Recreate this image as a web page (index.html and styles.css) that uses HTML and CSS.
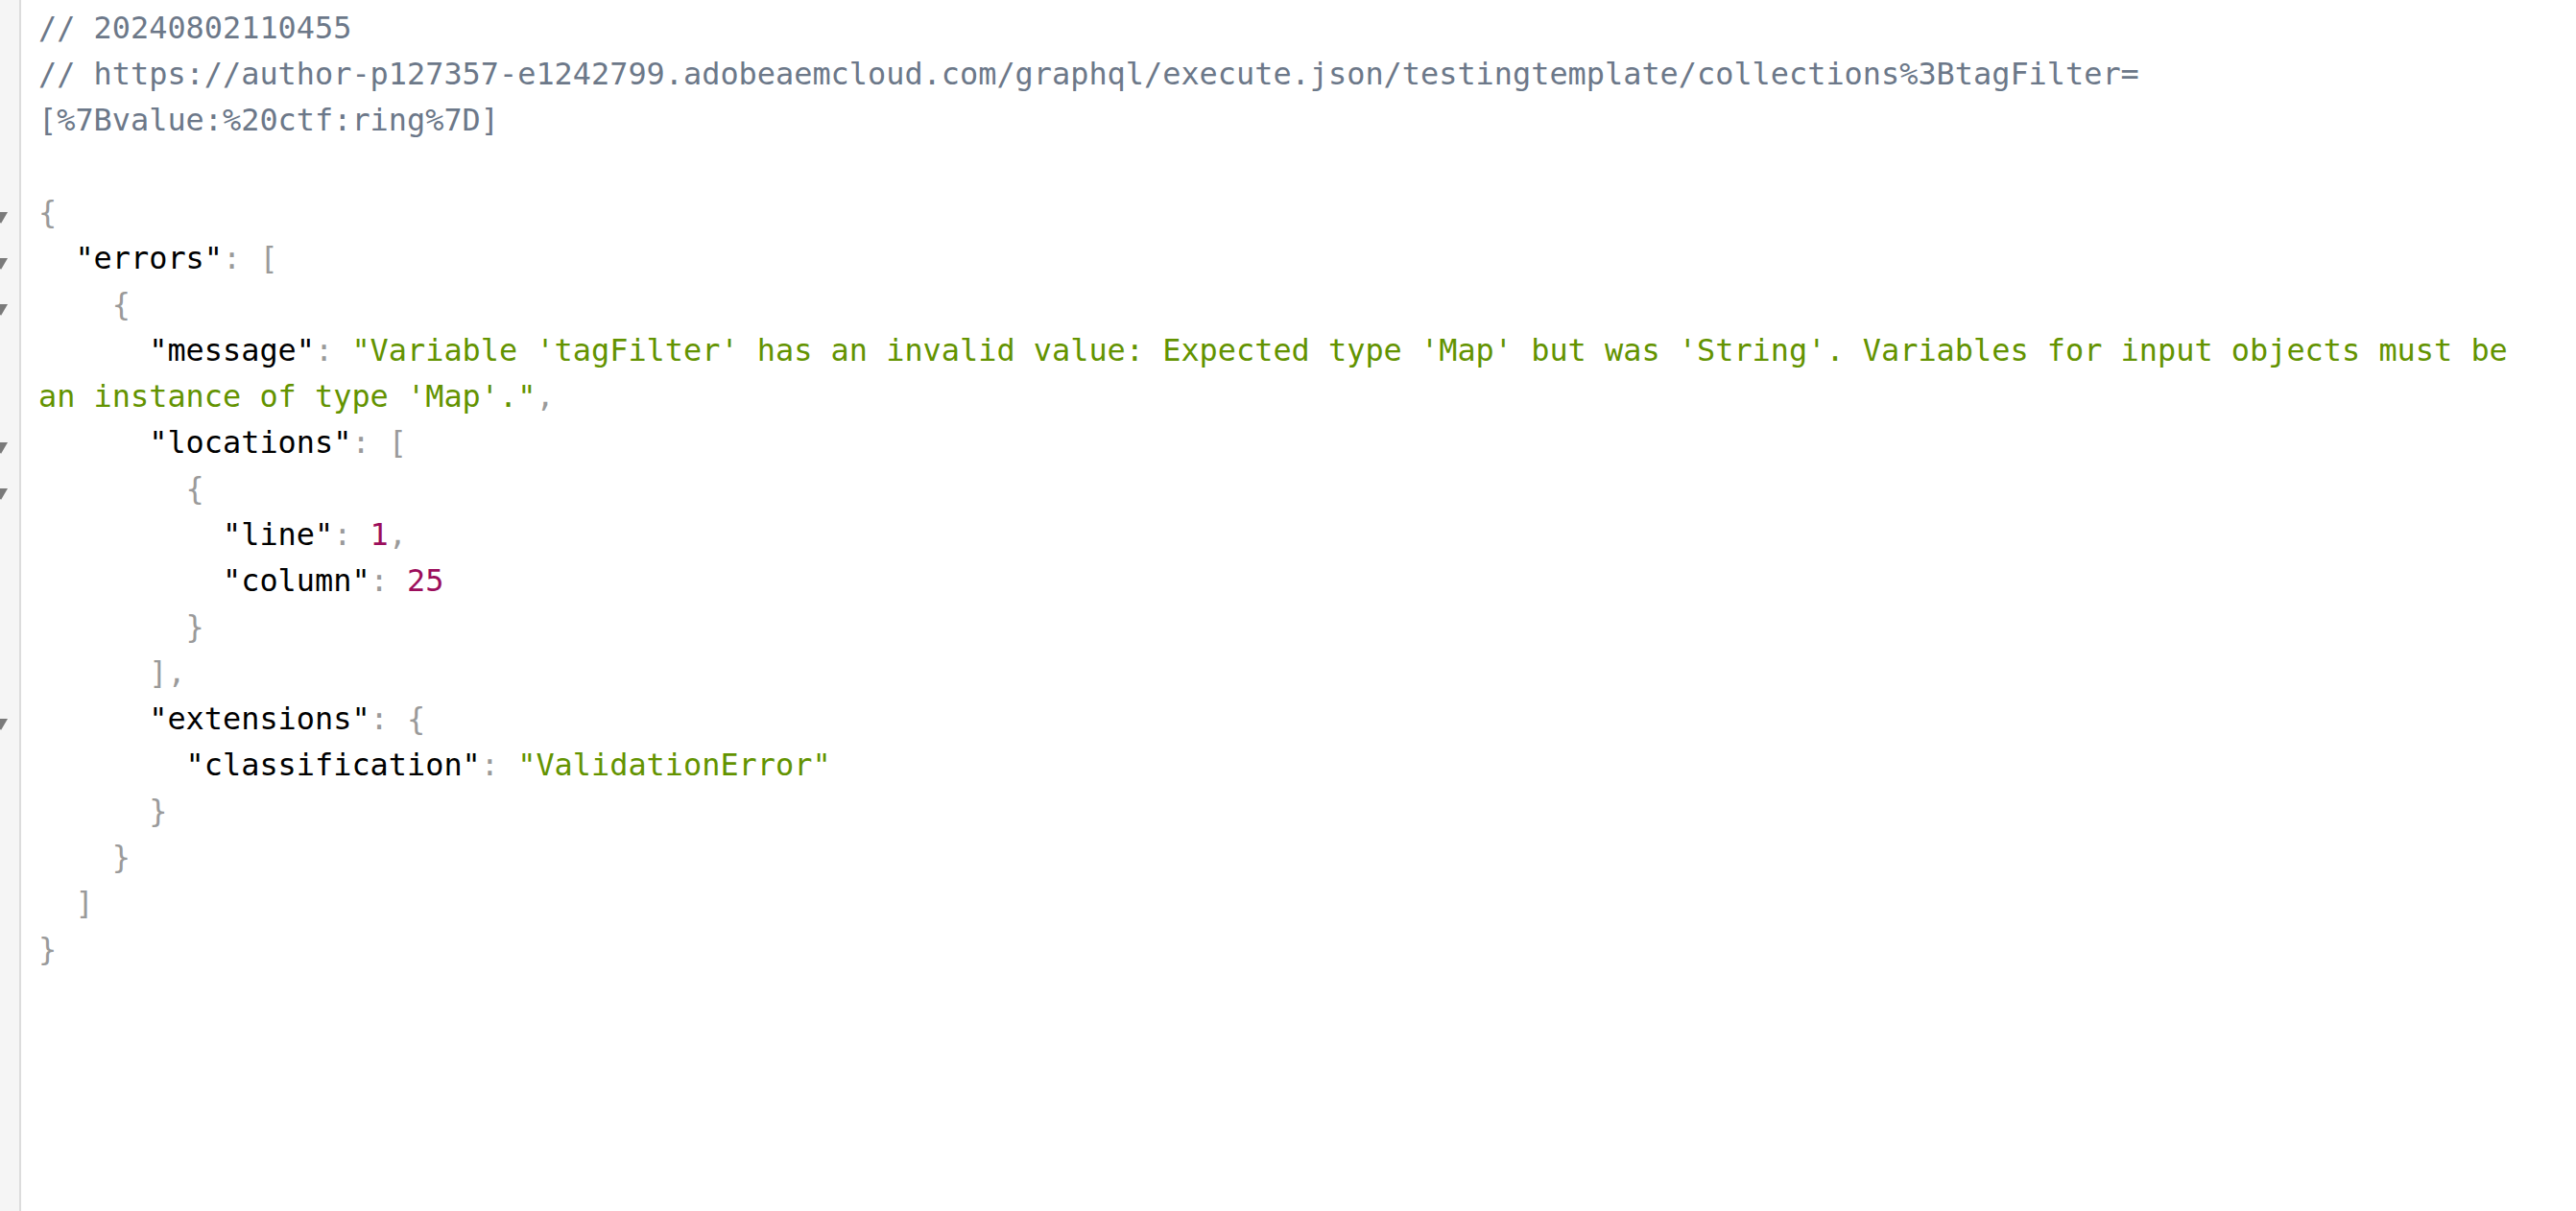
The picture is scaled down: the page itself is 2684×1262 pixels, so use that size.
FILE: index.html
```html
<!DOCTYPE html>
<html lang="en">
<head>
<meta charset="utf-8">
<title>JSON</title>
<link rel="stylesheet" href="styles.css">
</head>
<body>
<div class="viewer">
  <div class="gutter">
    <div class="g"></div>
    <div class="g"></div>
    <div class="g"></div>
    <div class="g"></div>
    <div class="g"><svg class="tri" viewBox="0 0 14 12"><polygon points="0,0 14,0 7,12"/></svg></div>
    <div class="g"><svg class="tri" viewBox="0 0 14 12"><polygon points="0,0 14,0 7,12"/></svg></div>
    <div class="g"><svg class="tri" viewBox="0 0 14 12"><polygon points="0,0 14,0 7,12"/></svg></div>
    <div class="g"></div>
    <div class="g"></div>
    <div class="g"><svg class="tri" viewBox="0 0 14 12"><polygon points="0,0 14,0 7,12"/></svg></div>
    <div class="g"><svg class="tri" viewBox="0 0 14 12"><polygon points="0,0 14,0 7,12"/></svg></div>
    <div class="g"></div>
    <div class="g"></div>
    <div class="g"></div>
    <div class="g"></div>
    <div class="g"><svg class="tri" viewBox="0 0 14 12"><polygon points="0,0 14,0 7,12"/></svg></div>
  </div>
  <div class="code">
    <div class="ln cm">// 20240802110455</div>
    <div class="ln cm">// https://author-p127357-e1242799.adobeaemcloud.com/graphql/execute.json/testingtemplate/collections%3BtagFilter=</div>
    <div class="ln cm">[%7Bvalue:%20ctf:ring%7D]</div>
    <div class="ln"> </div>
    <div class="ln"><span class="p">{</span></div>
    <div class="ln">  <span class="k">"errors"</span><span class="p">: [</span></div>
    <div class="ln">    <span class="p">{</span></div>
    <div class="ln">      <span class="k">"message"</span><span class="p">: </span><span class="s">"Variable 'tagFilter' has an invalid value: Expected type 'Map' but was 'String'. Variables for input objects must be</span></div>
    <div class="ln"><span class="s">an instance of type 'Map'."</span><span class="p">,</span></div>
    <div class="ln">      <span class="k">"locations"</span><span class="p">: [</span></div>
    <div class="ln">        <span class="p">{</span></div>
    <div class="ln">          <span class="k">"line"</span><span class="p">: </span><span class="n">1</span><span class="p">,</span></div>
    <div class="ln">          <span class="k">"column"</span><span class="p">: </span><span class="n">25</span></div>
    <div class="ln">        <span class="p">}</span></div>
    <div class="ln">      <span class="p">],</span></div>
    <div class="ln">      <span class="k">"extensions"</span><span class="p">: {</span></div>
    <div class="ln">        <span class="k">"classification"</span><span class="p">: </span><span class="s">"ValidationError"</span></div>
    <div class="ln">      <span class="p">}</span></div>
    <div class="ln">    <span class="p">}</span></div>
    <div class="ln">  <span class="p">]</span></div>
    <div class="ln"><span class="p">}</span></div>
  </div>
</div>
</body>
</html>
```

FILE: styles.css
```css
html, body {
  margin: 0;
  padding: 0;
  background: #ffffff;
}

.viewer {
  display: flex;
  min-height: 100vh;
}

.gutter {
  width: 20px;
  flex: none;
  background: #f5f5f5;
  border-right: 2px solid #dcdcdc;
  padding-top: 5px;
  overflow: hidden;
}

.g {
  height: 48px;
  position: relative;
}

.tri {
  position: absolute;
  left: -6px;
  top: 24px;
  width: 14px;
  height: 12px;
  fill: #7a7a7a;
}

.code {
  flex: 1;
  padding: 5px 0 0 18px;
  font-family: "DejaVu Sans Mono", "Liberation Mono", monospace;
  font-size: 31.9px;
  line-height: 48px;
  color: #000000;
}

.ln {
  white-space: pre;
  height: 48px;
}

.cm { color: #6c7889; }
.k { color: #000000; }
.p { color: #9a9a9a; }
.s { color: #639300; }
.n { color: #9c0e5c; }
```
